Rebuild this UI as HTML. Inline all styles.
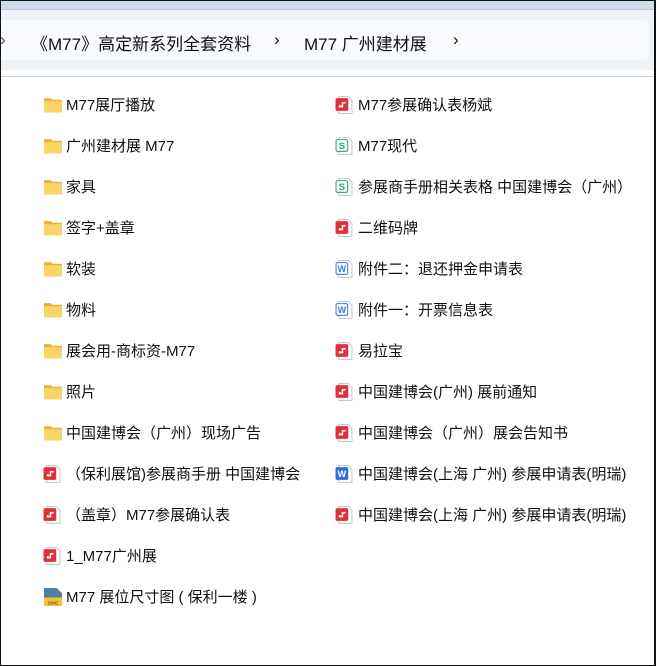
<!DOCTYPE html>
<html><head><meta charset="utf-8"><style>
*{margin:0;padding:0;box-sizing:border-box}
body{width:656px;height:666px;background:#fff;position:relative;overflow:hidden;font-family:"Liberation Sans","Noto Sans CJK SC",sans-serif;color:#111}
.frame{position:absolute;inset:0;border:1px solid #111;border-right-width:2px;pointer-events:none;z-index:5}
.top{position:absolute;left:0;top:0;width:656px;height:10px;background:#d0dcea;border-bottom:1px solid #bccadb}
.bar{position:absolute;left:0;top:10px;width:656px;height:60px;background:#eef2f8}
.crumb{position:absolute;left:-10px;top:20px;width:659px;height:40px;background:#f8fafd;border-radius:6px}
.ln{position:absolute;left:0;top:76px;width:656px;height:1px;background:#c6d2de}
.bc{position:absolute;top:30px;font-size:17px;white-space:nowrap}
.it{position:absolute;font-size:15px;white-space:nowrap;height:20px;line-height:20px}
.ic{position:absolute;width:20px;height:20px}
.wrap{position:absolute;left:0;top:1px;width:656px;height:660px}
</style></head><body>
<div class="top"></div><div class="bar"></div><div class="crumb"></div><div class="ln"></div>
<div class="bc" style="left:0;color:#555">›</div>
<div class="bc" style="left:31px">《M77》高定新系列全套资料</div>
<div class="bc" style="left:274px">›</div>
<div class="bc" style="left:304px">M77 广州建材展</div>
<div class="bc" style="left:453px">›</div>
<svg width="0" height="0" style="position:absolute"><defs>
<symbol id="f" viewBox="0 0 17 17"><path d="M0 2h6.5l1.5 1.5H17v12H0z" fill="#e9b23a"/><path d="M0 5h17v10.5H0z" fill="#fbd467"/></symbol>
<symbol id="p" viewBox="0 0 17 17"><path d="M3.5 0.5h9l3.5 3.5v12.5H3.5z" fill="#fff" stroke="#c9c9c9"/><rect x="0.5" y="2" width="12" height="12" rx="1.5" fill="#e0303a"/><path d="M3.5 10h3.5v-3.5h3M4.5 10v-1.5M9 6.5v-1" stroke="#fff" stroke-width="1.4" fill="none"/></symbol>
<symbol id="s" viewBox="0 0 17 17"><path d="M3.5 0.5h9l3.5 3.5v12.5H3.5z" fill="#fff" stroke="#c9c9c9"/><rect x="1" y="2.5" width="11" height="11" rx="1.5" fill="#fff" stroke="#2aa36b"/><text x="6.5" y="11.3" font-size="9" font-family="Liberation Sans" font-weight="bold" fill="#2aa36b" text-anchor="middle">S</text></symbol>
<symbol id="w" viewBox="0 0 17 17"><path d="M3.5 0.5h9l3.5 3.5v12.5H3.5z" fill="#fff" stroke="#c9c9c9"/><rect x="1" y="2.5" width="11" height="11" rx="1.5" fill="#fff" stroke="#3a7be0"/><text x="6.5" y="11.3" font-size="8.5" font-family="Liberation Sans" font-weight="bold" fill="#3a7be0" text-anchor="middle">W</text></symbol>
<symbol id="wb" viewBox="0 0 17 17"><path d="M3.5 0.5h9l3.5 3.5v12.5H3.5z" fill="#fff" stroke="#c9c9c9"/><rect x="0.5" y="2" width="12" height="12" rx="1.5" fill="#2f6fe0"/><text x="6.5" y="11.3" font-size="8.5" font-family="Liberation Sans" font-weight="bold" fill="#fff" text-anchor="middle">W</text></symbol>
<symbol id="d" viewBox="0 0 17 17"><path d="M0 0h12l5 5v12H0z" fill="#4d7fa8"/><path d="M0 9h17v8H0z" fill="#f2c230"/><text x="8.5" y="15.5" font-size="4" font-family="Liberation Sans" fill="#333" text-anchor="middle">DWG</text></symbol>
</defs></svg>
<div class="wrap">
<svg class="ic" style="left:44px;top:95px" viewBox="0 0 20 20"><use href="#f" width="18" height="18"/></svg><div class="it" style="left:66px;top:95px">M77展厅播放</div>
<svg class="ic" style="left:44px;top:136px" viewBox="0 0 20 20"><use href="#f" width="18" height="18"/></svg><div class="it" style="left:66px;top:136px">广州建材展 M77</div>
<svg class="ic" style="left:44px;top:177px" viewBox="0 0 20 20"><use href="#f" width="18" height="18"/></svg><div class="it" style="left:66px;top:177px">家具</div>
<svg class="ic" style="left:44px;top:218px" viewBox="0 0 20 20"><use href="#f" width="18" height="18"/></svg><div class="it" style="left:66px;top:218px">签字+盖章</div>
<svg class="ic" style="left:44px;top:259px" viewBox="0 0 20 20"><use href="#f" width="18" height="18"/></svg><div class="it" style="left:66px;top:259px">软装</div>
<svg class="ic" style="left:44px;top:300px" viewBox="0 0 20 20"><use href="#f" width="18" height="18"/></svg><div class="it" style="left:66px;top:300px">物料</div>
<svg class="ic" style="left:44px;top:341px" viewBox="0 0 20 20"><use href="#f" width="18" height="18"/></svg><div class="it" style="left:66px;top:341px">展会用-商标资-M77</div>
<svg class="ic" style="left:44px;top:382px" viewBox="0 0 20 20"><use href="#f" width="18" height="18"/></svg><div class="it" style="left:66px;top:382px">照片</div>
<svg class="ic" style="left:44px;top:423px" viewBox="0 0 20 20"><use href="#f" width="18" height="18"/></svg><div class="it" style="left:66px;top:423px">中国建博会（广州）现场广告</div>
<svg class="ic" style="left:43px;top:464px" viewBox="0 0 20 20"><use href="#p" width="18" height="18"/></svg><div class="it" style="left:66px;top:464px">（保利展馆)参展商手册 中国建博会</div>
<svg class="ic" style="left:43px;top:505px" viewBox="0 0 20 20"><use href="#p" width="18" height="18"/></svg><div class="it" style="left:66px;top:505px">（盖章）M77参展确认表</div>
<svg class="ic" style="left:43px;top:546px" viewBox="0 0 20 20"><use href="#p" width="18" height="18"/></svg><div class="it" style="left:66px;top:546px">1_M77广州展</div>
<svg class="ic" style="left:44px;top:587px" viewBox="0 0 20 20"><use href="#d" width="18" height="18"/></svg><div class="it" style="left:66px;top:587px">M77 展位尺寸图 ( 保利一楼 )</div>
<svg class="ic" style="left:335px;top:95px" viewBox="0 0 20 20"><use href="#p" width="18" height="18"/></svg><div class="it" style="left:358px;top:95px">M77参展确认表杨斌</div>
<svg class="ic" style="left:335px;top:136px" viewBox="0 0 20 20"><use href="#s" width="18" height="18"/></svg><div class="it" style="left:358px;top:136px">M77现代</div>
<svg class="ic" style="left:335px;top:177px" viewBox="0 0 20 20"><use href="#s" width="18" height="18"/></svg><div class="it" style="left:358px;top:177px">参展商手册相关表格 中国建博会（广州）</div>
<svg class="ic" style="left:335px;top:218px" viewBox="0 0 20 20"><use href="#p" width="18" height="18"/></svg><div class="it" style="left:358px;top:218px">二维码牌</div>
<svg class="ic" style="left:335px;top:259px" viewBox="0 0 20 20"><use href="#w" width="18" height="18"/></svg><div class="it" style="left:358px;top:259px">附件二：退还押金申请表</div>
<svg class="ic" style="left:335px;top:300px" viewBox="0 0 20 20"><use href="#w" width="18" height="18"/></svg><div class="it" style="left:358px;top:300px">附件一：开票信息表</div>
<svg class="ic" style="left:335px;top:341px" viewBox="0 0 20 20"><use href="#p" width="18" height="18"/></svg><div class="it" style="left:358px;top:341px">易拉宝</div>
<svg class="ic" style="left:335px;top:382px" viewBox="0 0 20 20"><use href="#p" width="18" height="18"/></svg><div class="it" style="left:358px;top:382px">中国建博会(广州) 展前通知</div>
<svg class="ic" style="left:335px;top:423px" viewBox="0 0 20 20"><use href="#p" width="18" height="18"/></svg><div class="it" style="left:358px;top:423px">中国建博会（广州）展会告知书</div>
<svg class="ic" style="left:335px;top:464px" viewBox="0 0 20 20"><use href="#wb" width="18" height="18"/></svg><div class="it" style="left:358px;top:464px">中国建博会(上海 广州) 参展申请表(明瑞)</div>
<svg class="ic" style="left:335px;top:505px" viewBox="0 0 20 20"><use href="#p" width="18" height="18"/></svg><div class="it" style="left:358px;top:505px">中国建博会(上海 广州) 参展申请表(明瑞)</div>
</div>
<div class="frame"></div>
</body></html>
